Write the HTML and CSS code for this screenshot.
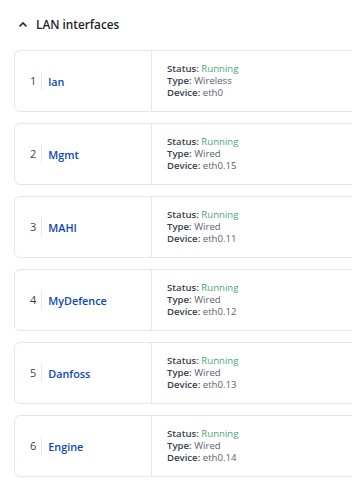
FILE: index.html
```html
<!DOCTYPE html>
<html lang="en">
<head>
  <meta charset="UTF-8" />
  <meta name="viewport" content="width=device-width, initial-scale=1" />
  <title>LAN interfaces</title>
  <link rel="stylesheet" href="styles.css">
</head>
<body>
  <div class="section">
    <div class="section-header">
      <svg class="chevron" width="10" height="7" viewBox="0 0 10 7">
        <path d="M1.5 5.5 L5 2 L8.5 5.5" fill="none" stroke="#1f2433" stroke-width="1.6" />
      </svg>
      <h2>LAN interfaces</h2>
    </div>

    <ul class="interfaces">
      <li class="iface">
        <div class="iface-name"><span class="num">1</span><a href="#">lan</a></div>
        <div class="iface-info">
          <div><b>Status:</b> <span class="ok">Running</span></div>
          <div><b>Type:</b> Wireless</div>
          <div><b>Device:</b> eth0</div>
        </div>
      </li>
      <li class="iface">
        <div class="iface-name"><span class="num">2</span><a href="#">Mgmt</a></div>
        <div class="iface-info">
          <div><b>Status:</b> <span class="ok">Running</span></div>
          <div><b>Type:</b> Wired</div>
          <div><b>Device:</b> eth0.15</div>
        </div>
      </li>
      <li class="iface">
        <div class="iface-name"><span class="num">3</span><a href="#">MAHI</a></div>
        <div class="iface-info">
          <div><b>Status:</b> <span class="ok">Running</span></div>
          <div><b>Type:</b> Wired</div>
          <div><b>Device:</b> eth0.11</div>
        </div>
      </li>
      <li class="iface">
        <div class="iface-name"><span class="num">4</span><a href="#">MyDefence</a></div>
        <div class="iface-info">
          <div><b>Status:</b> <span class="ok">Running</span></div>
          <div><b>Type:</b> Wired</div>
          <div><b>Device:</b> eth0.12</div>
        </div>
      </li>
      <li class="iface">
        <div class="iface-name"><span class="num">5</span><a href="#">Danfoss</a></div>
        <div class="iface-info">
          <div><b>Status:</b> <span class="ok">Running</span></div>
          <div><b>Type:</b> Wired</div>
          <div><b>Device:</b> eth0.13</div>
        </div>
      </li>
      <li class="iface">
        <div class="iface-name"><span class="num">6</span><a href="#">Engine</a></div>
        <div class="iface-info">
          <div><b>Status:</b> <span class="ok">Running</span></div>
          <div><b>Type:</b> Wired</div>
          <div><b>Device:</b> eth0.14</div>
        </div>
      </li>
    </ul>
  </div>
</body>
</html>
```

FILE: styles.css
```css
body {
  margin: 0;
  background: #fff;
  font-family: 'Open Sans', sans-serif;
  color: #2b2f3a;
  overflow: hidden;
}

.section {
  padding: 14px 0 0 14px;
  width: 420px;
}

.section-header {
  display: flex;
  align-items: center;
  gap: 8px;
  padding-left: 4px;
  height: 20px;
}

.chevron {
  display: block;
}

.section-header h2 {
  margin: 0;
  font-size: 11.8px;
  font-weight: 600;
  color: #1b1f2b;
}

.interfaces {
  list-style: none;
  margin: 16px 0 0 0;
  padding: 0;
  display: flex;
  flex-direction: column;
  gap: 11px;
}

.iface {
  display: flex;
  height: 62px;
  border: 1px solid #e3e6ee;
  border-radius: 6px;
  box-sizing: border-box;
}

.iface-name {
  width: 137px;
  border-right: 1px solid #e3e6ee;
  display: flex;
  align-items: center;
  padding-left: 15px;
  box-sizing: border-box;
}

.num {
  font-size: 11px;
  color: #3a3f4b;
  padding-right: 5px;
  margin-right: 6px;
  border-right: 1px solid #e3e6ee;
  line-height: 18px;
}

.iface-name a {
  font-size: 10.8px;
  font-weight: 600;
  color: #0d47b7;
  text-decoration: none;
}

.iface-info {
  padding-left: 15px;
  display: flex;
  flex-direction: column;
  justify-content: center;
  font-size: 9.6px;
  line-height: 12.3px;
  color: #5b6170;
}

.iface-info b {
  font-weight: 600;
  color: #3a3f4b;
}

.ok {
  color: #4aa771;
}
```
